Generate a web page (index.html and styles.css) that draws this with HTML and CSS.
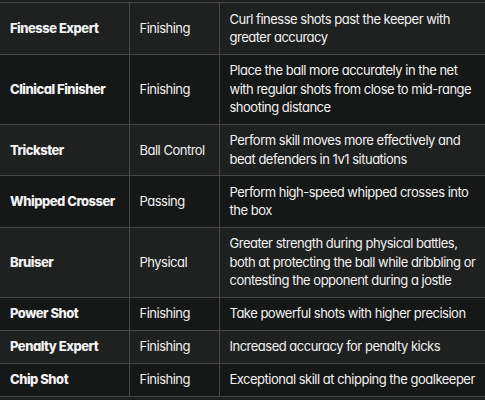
FILE: index.html
```html
<!DOCTYPE html>
<html>
<head>
<meta charset="utf-8">
<link rel="stylesheet" href="styles.css">
</head>
<body>
<table class="traits">
  <colgroup><col class="c1"><col class="c2"><col class="c3"></colgroup>
  <tbody>
    <tr class="odd"><td class="name">Finesse Expert</td><td>Finishing</td><td>Curl finesse shots past the keeper with greater accuracy</td></tr>
    <tr class="even"><td class="name">Clinical Finisher</td><td>Finishing</td><td>Place the ball more accurately in the net with regular shots from close to mid-range shooting distance</td></tr>
    <tr class="odd"><td class="name">Trickster</td><td>Ball Control</td><td>Perform skill moves more effectively and beat defenders in 1v1 situations</td></tr>
    <tr class="even"><td class="name">Whipped Crosser</td><td>Passing</td><td>Perform high-speed whipped crosses into the box</td></tr>
    <tr class="odd"><td class="name">Bruiser</td><td>Physical</td><td>Greater strength during physical battles, both at protecting the ball while dribbling or contesting the opponent during a jostle</td></tr>
    <tr class="even"><td class="name">Power Shot</td><td>Finishing</td><td>Take powerful shots with higher precision</td></tr>
    <tr class="odd"><td class="name">Penalty Expert</td><td>Finishing</td><td>Increased accuracy for penalty kicks</td></tr>
    <tr class="even"><td class="name">Chip Shot</td><td>Finishing</td><td>Exceptional skill at chipping the goalkeeper</td></tr>
  </tbody>
</table>
</body>
</html>
```
FILE: styles.css
```css
html, body {
  margin: 0;
  padding: 0;
  background: #1f2020;
}
body {
  padding-top: 2px;
  font-family: Inter, "Noto Sans", sans-serif;
  font-feature-settings: "cv11";
  font-size: 13px;
  letter-spacing: -0.5px;
  color: #f2f2f2;
}
.traits {
  border-collapse: collapse;
  width: 485px;
  table-layout: fixed;
}
.c1 { width: 129px; }
.c2 { width: 90px; }
.c3 { width: 266px; }
.traits td {
  border-top: 1px solid #474747;
  border-bottom: 1px solid #474747;
  border-left: 1px solid #474747;
  padding: 6.75px 2px 6.75px 10px;
  line-height: 18.5px;
  vertical-align: middle;
}
.traits td:first-child {
  border-left: none;
}
.odd { background: #1f2020; }
.even { background: #161717; }
.name {
  font-weight: 800;
  letter-spacing: -0.5px;
}
```
